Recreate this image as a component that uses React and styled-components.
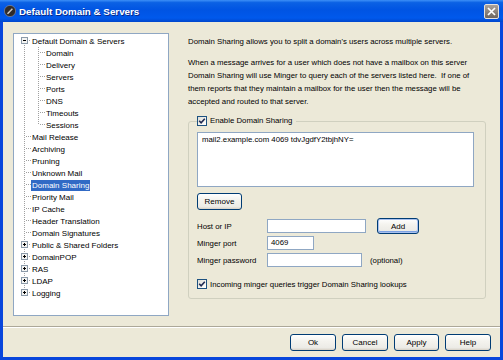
import React from 'react';
import styled, { createGlobalStyle } from 'styled-components';

const GlobalStyle = createGlobalStyle`
  html, body {
    margin: 0;
    padding: 0;
    background: #ece9d8;
  }
  body {
    font-family: "Liberation Sans", Arial, sans-serif;
    font-size: 8px;
    color: #000;
  }
`;

const Window = styled.div`
  width: 503px;
  height: 360px;
  display: flex;
  flex-direction: column;
  background: #0846dc;
  overflow: hidden;
`;

const TitleBar = styled.div`
  height: 22px;
  flex: none;
  display: flex;
  align-items: center;
  gap: 3px;
  padding: 0 4px 0 4px;
  background: linear-gradient(to bottom, #3d8ff7 0%, #0b61e4 12%, #0054e3 45%, #0059ec 82%, #0046cc 100%);
`;

const TitleText = styled.span`
  font-family: "Liberation Sans", Arial, sans-serif;
  font-weight: bold;
  font-size: 9.8px;
  color: #fff;
  text-shadow: 1px 1px 0 #0a2a8a;
  margin-top: 1px;
`;

const CloseButton = styled.div`
  margin-left: auto;
  width: 15px;
  height: 15px;
  box-sizing: border-box;
  border: 1px solid #e6e2de;
  border-radius: 2px;
  background: linear-gradient(to bottom, #aaa29b, #6e6660);
  display: flex;
  align-items: center;
  justify-content: center;
`;

const Body = styled.div`
  flex: 1;
  margin: 0 3px 3px 3px;
  background: #ece9d8;
  display: flex;
  flex-direction: column;
`;

const Main = styled.div`
  display: flex;
  padding: 11px 0 0 10px;
`;

const TreeBox = styled.div`
  width: 156px;
  height: 283px;
  box-sizing: border-box;
  border: 1px solid #8fa7c3;
  background: #fff;
  padding-top: 1px;
  flex: none;
`;

const TreeRow = styled.div`
  display: flex;
  align-items: center;
  height: 12px;
  white-space: nowrap;
  svg {
    flex: none;
    display: block;
  }
`;

const TreeLabel = styled.span`
  display: inline-block;
  height: 11px;
  line-height: 11px;
  padding: 0 1px;
  background: ${(p) => (p.$selected ? '#316ac5' : 'transparent')};
  color: ${(p) => (p.$selected ? '#fff' : '#000')};
`;

const RightPane = styled.div`
  margin-left: 19px;
  width: 298px;
  display: flex;
  flex-direction: column;
  font-size: 7.8px;
`;

const Para = styled.p`
  margin: ${(p) => (p.$gap ? '8px' : '1.5px')} 0 0 0;
  line-height: 13px;
  white-space: nowrap;
`;

const Group = styled.fieldset`
  margin: 8.5px 0 0 0;
  padding: 0;
  border: 1px solid #d0d0bf;
  border-radius: 3px;
  min-width: 0;
`;

const Legend = styled.legend`
  margin-left: 8px;
  padding: 0 4px 0 0;
  display: flex;
  align-items: center;
  gap: 3px;
  height: 10px;
  line-height: 10px;
`;

const GroupInner = styled.div`
  padding: 6px 11px 9px 8px;
  display: flex;
  flex-direction: column;
  align-items: flex-start;
`;

const ListBox = styled.div`
  width: 277px;
  height: 55px;
  box-sizing: border-box;
  border: 1px solid #8fa7c3;
  background: #fff;
  padding: 2px 4px;
  line-height: 10px;
`;

const Button = styled.button`
  width: ${(p) => p.$w || 46}px;
  height: ${(p) => p.$h || 17}px;
  box-sizing: border-box;
  padding: 0;
  margin: ${(p) => p.$m || '0'};
  font-family: "Liberation Sans", Arial, sans-serif;
  font-size: 8px;
  color: #000;
  border: 1px solid #003c74;
  border-radius: 3px;
  background: linear-gradient(to bottom, #ffffff 0%, #f4f3ee 40%, #ecebe6 85%, #d6d0c5 100%);
  box-shadow: ${(p) => (p.$focus ? 'inset 0 0 0 1px #a9c1ef, inset 0 -1px 0 1px #7da2e3' : 'none')};
`;

const FormGrid = styled.div`
  margin-top: 9px;
  display: grid;
  grid-template-columns: 70px auto;
  grid-auto-rows: 14px;
  row-gap: 3px;
  align-items: center;
`;

const FieldLabel = styled.span`
  white-space: nowrap;
`;

const FieldLine = styled.div`
  display: flex;
  align-items: center;
  white-space: nowrap;
`;

const TextInput = styled.div`
  width: ${(p) => p.$w}px;
  height: 14px;
  box-sizing: border-box;
  border: 1px solid #8fa7c3;
  background: #fff;
  padding: 0 3px;
  line-height: 12px;
`;

const Note = styled.span`
  margin-left: 8px;
`;

const CheckLine = styled.label`
  margin-top: 12px;
  display: flex;
  align-items: center;
  gap: 3px;
  white-space: nowrap;
`;

const CheckBox = styled.span`
  width: 10px;
  height: 10px;
  box-sizing: border-box;
  border: 1px solid #1c5180;
  background: linear-gradient(135deg, #dcdcd6 0%, #f4f4f0 60%, #ffffff 100%);
  display: inline-flex;
  align-items: center;
  justify-content: center;
  flex: none;
`;

const Separator = styled.div`
  margin-top: 10px;
  border-top: 1px solid #aca899;
  border-bottom: 1px solid #fff;
`;

const ButtonBar = styled.div`
  display: flex;
  justify-content: flex-end;
  gap: 6px;
  padding: 6px 9px 0 0;
`;

const TREE = [
  { label: 'Default Domain & Servers', level: 0, toggle: 'minus' },
  { label: 'Domain', level: 1 },
  { label: 'Delivery', level: 1 },
  { label: 'Servers', level: 1 },
  { label: 'Ports', level: 1 },
  { label: 'DNS', level: 1 },
  { label: 'Timeouts', level: 1 },
  { label: 'Sessions', level: 1 },
  { label: 'Mail Release', level: 0 },
  { label: 'Archiving', level: 0 },
  { label: 'Pruning', level: 0 },
  { label: 'Unknown Mail', level: 0 },
  { label: 'Domain Sharing', level: 0, selected: true },
  { label: 'Priority Mail', level: 0 },
  { label: 'IP Cache', level: 0 },
  { label: 'Header Translation', level: 0 },
  { label: 'Domain Signatures', level: 0 },
  { label: 'Public & Shared Folders', level: 0, toggle: 'plus' },
  { label: 'DomainPOP', level: 0, toggle: 'plus' },
  { label: 'RAS', level: 0, toggle: 'plus' },
  { label: 'LDAP', level: 0, toggle: 'plus' },
  { label: 'Logging', level: 0, toggle: 'plus' },
];

// work out which dotted lines each row needs
const hasNextSibling = (i) => {
  const lvl = TREE[i].level;
  for (let j = i + 1; j < TREE.length; j++) {
    if (TREE[j].level < lvl) return false;
    if (TREE[j].level === lvl) return true;
  }
  return false;
};

const ROWS = (() => {
  const stack = [];
  return TREE.map((item, i) => {
    stack.length = item.level;
    const trunks = stack.slice();
    const hasNext = hasNextSibling(i);
    stack[item.level] = hasNext;
    return { ...item, first: i === 0, hasNext, trunks };
  });
})();

const dot = { stroke: '#a0a0a0', strokeDasharray: '1 1' };

const TreeLines = ({ level, first, hasNext, toggle, trunks }) => {
  const x = 10.5 + level * 14;
  return (
    <svg width={17 + level * 14} height={12} shapeRendering="crispEdges">
      {trunks.map((on, k) =>
        on ? <line key={k} x1={10.5 + k * 14} y1={0} x2={10.5 + k * 14} y2={12} {...dot} /> : null
      )}
      {!first && <line x1={x} y1={0} x2={x} y2={5} {...dot} />}
      {hasNext && <line x1={x} y1={6} x2={x} y2={12} {...dot} />}
      <line x1={toggle ? x + 4 : x + 1} y1={5.5} x2={x + 7} y2={5.5} {...dot} />
      {toggle && (
        <g>
          <rect x={x - 3} y={2.5} width={6} height={6} fill="#f4f4f2" stroke="#8b9aa9" />
          <line x1={x - 1.5} y1={5.5} x2={x + 1.5} y2={5.5} stroke="#000" />
          {toggle === 'plus' && <line x1={x} y1={4} x2={x} y2={7} stroke="#000" />}
        </g>
      )}
    </svg>
  );
};

const Check = () => (
  <CheckBox>
    <svg width="8" height="8" viewBox="0 0 8 8">
      <path d="M1.2 3.8 L3.1 5.8 L6.8 1.8" fill="none" stroke="#1f2a52" strokeWidth="1.6" />
    </svg>
  </CheckBox>
);

const AppIcon = () => (
  <svg width="12" height="12" viewBox="0 0 12 12">
    <circle cx="6" cy="6" r="5.6" fill="#2f2b29" stroke="#9a948e" strokeWidth="0.6" />
    <path d="M3 8.2 L7.9 3.3 L8.9 4.3 L4 9.2 Z" fill="#d8d4cf" />
    <path d="M4 7.2 L7 4.2" stroke="#5b5652" strokeWidth="0.6" />
  </svg>
);

const App = () => (
  <Window>
    <GlobalStyle />
    <TitleBar>
      <AppIcon />
      <TitleText>Default Domain &amp; Servers</TitleText>
      <CloseButton>
        <svg width="9" height="9" viewBox="0 0 9 9">
          <path d="M1 1 L8 8 M8 1 L1 8" stroke="#fff" strokeWidth="1.7" />
        </svg>
      </CloseButton>
    </TitleBar>

    <Body>
      <Main>
        <TreeBox>
          {ROWS.map((row) => (
            <TreeRow key={row.label}>
              <TreeLines {...row} />
              <TreeLabel $selected={row.selected}>{row.label}</TreeLabel>
            </TreeRow>
          ))}
        </TreeBox>

        <RightPane>
          <Para>Domain Sharing allows you to split a domain's users across multiple servers.</Para>
          <Para $gap>
            When a message arrives for a user which does not have a mailbox on this server
            <br />
            Domain Sharing will use Minger to query each of the servers listed here.&nbsp; If one of
            <br />
            them reports that they maintain a mailbox for the user then the message will be
            <br />
            accepted and routed to that server.
          </Para>

          <Group>
            <Legend>
              <Check />
              <span>Enable Domain Sharing</span>
            </Legend>
            <GroupInner>
              <ListBox>mail2.example.com 4069 tdvJgdfY2tbjhNY=</ListBox>
              <Button $w={45} $m="6px 0 0 0">Remove</Button>

              <FormGrid>
                <FieldLabel>Host or IP</FieldLabel>
                <FieldLine>
                  <TextInput $w={99} />
                  <Button $w={42} $h={16} $m="0 0 0 11px" $focus>Add</Button>
                </FieldLine>
                <FieldLabel>Minger port</FieldLabel>
                <FieldLine>
                  <TextInput $w={47}>4069</TextInput>
                </FieldLine>
                <FieldLabel>Minger password</FieldLabel>
                <FieldLine>
                  <TextInput $w={95} />
                  <Note>(optional)</Note>
                </FieldLine>
              </FormGrid>

              <CheckLine>
                <Check />
                <span>Incoming minger queries trigger Domain Sharing lookups</span>
              </CheckLine>
            </GroupInner>
          </Group>
        </RightPane>
      </Main>

      <Separator />

      <ButtonBar>
        <Button>Ok</Button>
        <Button>Cancel</Button>
        <Button $w={45}>Apply</Button>
        <Button>Help</Button>
      </ButtonBar>
    </Body>
  </Window>
);

export default App;
